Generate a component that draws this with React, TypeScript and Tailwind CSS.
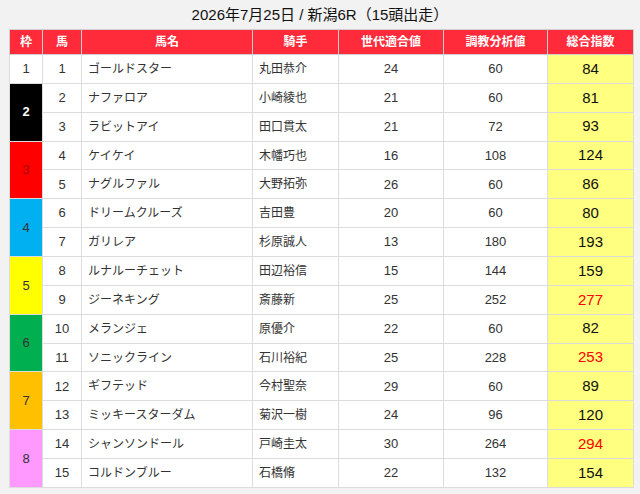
import React from "react";

type Horse = { no: number; name: string; jockey: string; gen: number; train: number; total: number };

const rows: Horse[] = [
  { no: 1, name: "ゴールドスター", jockey: "丸田恭介", gen: 24, train: 60, total: 84 },
  { no: 2, name: "ナファロア", jockey: "小崎綾也", gen: 21, train: 60, total: 81 },
  { no: 3, name: "ラビットアイ", jockey: "田口貫太", gen: 21, train: 72, total: 93 },
  { no: 4, name: "ケイケイ", jockey: "木幡巧也", gen: 16, train: 108, total: 124 },
  { no: 5, name: "ナグルファル", jockey: "大野拓弥", gen: 26, train: 60, total: 86 },
  { no: 6, name: "ドリームクルーズ", jockey: "吉田豊", gen: 20, train: 60, total: 80 },
  { no: 7, name: "ガリレア", jockey: "杉原誠人", gen: 13, train: 180, total: 193 },
  { no: 8, name: "ルナルーチェット", jockey: "田辺裕信", gen: 15, train: 144, total: 159 },
  { no: 9, name: "ジーネキング", jockey: "斎藤新", gen: 25, train: 252, total: 277 },
  { no: 10, name: "メランジェ", jockey: "原優介", gen: 22, train: 60, total: 82 },
  { no: 11, name: "ソニックライン", jockey: "石川裕紀", gen: 25, train: 228, total: 253 },
  { no: 12, name: "ギフテッド", jockey: "今村聖奈", gen: 29, train: 60, total: 89 },
  { no: 13, name: "ミッキースターダム", jockey: "菊沢一樹", gen: 24, train: 96, total: 120 },
  { no: 14, name: "シャンソンドール", jockey: "戸崎圭太", gen: 30, train: 264, total: 294 },
  { no: 15, name: "コルドンブルー", jockey: "石橋脩", gen: 22, train: 132, total: 154 },
];

// 枠: [label, rowspan, classes]
const waku: Record<number, [number, number, string]> = {
  1: [1, 1, "bg-white text-[#333]"],
  2: [2, 2, "bg-black text-white font-bold"],
  4: [3, 2, "bg-[#ff0000] text-[#a00]"],
  6: [4, 2, "bg-[#00b0f0] text-[#333]"],
  8: [5, 2, "bg-[#ffff00] text-[#333]"],
  10: [6, 2, "bg-[#00b050] text-[#333]"],
  12: [7, 2, "bg-[#ffc000] text-[#333]"],
  14: [8, 2, "bg-[#ff99ff] text-[#333]"],
};

const th = "border border-[#cfcfcf] bg-[#ff2a3a] text-white text-[12px] font-bold h-[25px] p-0";
const td = "border border-[#dcdcdc] h-[28.87px] p-0 text-[13px] text-[#333]";

export default function App() {
  return (
    <div className="w-[640px] h-[494px] bg-[#f2f2f2] pt-[5px] px-[9px] overflow-hidden" style={{ fontFamily: '"Liberation Sans", "Noto Sans CJK JP", sans-serif' }}>
      <h1 className="text-center text-[15px] leading-[19px] text-[#111] mb-[5px]">
        2026年7月25日 / 新潟6R（15頭出走）
      </h1>
      <table className="w-[624px] border-collapse table-fixed">
        <colgroup>
          <col className="w-[33px]" />
          <col className="w-[39px]" />
          <col className="w-[171px]" />
          <col className="w-[86px]" />
          <col className="w-[105px]" />
          <col className="w-[104px]" />
          <col className="w-[86px]" />
        </colgroup>
        <thead>
          <tr>
            <th className={th}>枠</th>
            <th className={th}>馬</th>
            <th className={th}>馬名</th>
            <th className={th}>騎手</th>
            <th className={th}>世代適合値</th>
            <th className={th}>調教分析値</th>
            <th className={`${th} bg-[#ff0000]`}>総合指数</th>
          </tr>
        </thead>
        <tbody>
          {rows.map((r) => {
            const w = waku[r.no];
            return (
              <tr key={r.no}>
                {w && (
                  <td rowSpan={w[1]} className={`${td} text-center ${w[2]}`}>
                    {w[0]}
                  </td>
                )}
                <td className={`${td} bg-white text-center`}>{r.no}</td>
                <td className={`${td} bg-white pl-[6px] !text-[12px]`}>{r.name}</td>
                <td className={`${td} bg-white pl-[6px] !text-[12px]`}>{r.jockey}</td>
                <td className={`${td} bg-white text-center`}>{r.gen}</td>
                <td className={`${td} bg-white text-center`}>{r.train}</td>
                <td
                  className={`${td} bg-[#ffff80] text-center !text-[15px] ${
                    r.total >= 250 ? "!text-[#ff0000]" : "!text-[#111]"
                  }`}
                >
                  {r.total}
                </td>
              </tr>
            );
          })}
        </tbody>
      </table>
    </div>
  );
}
